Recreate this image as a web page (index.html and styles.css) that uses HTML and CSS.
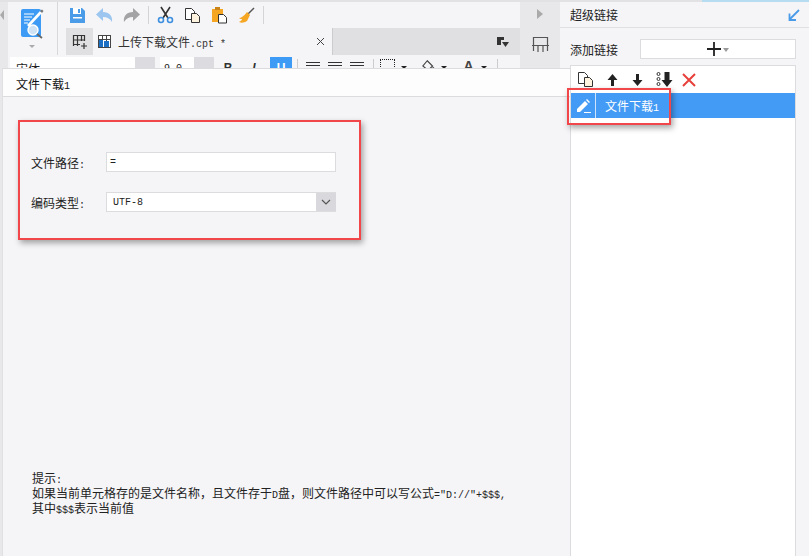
FILE: index.html
```html
<!DOCTYPE html>
<html lang="zh">
<head>
<meta charset="utf-8">
<title>超级链接</title>
<link rel="stylesheet" href="styles.css">
</head>
<body>
<div class="app">
  <div class="edge">
    <svg class="edge-arrow" width="4" height="10" viewBox="0 0 4 10"><path d="M4 0L0 5l4 5z" fill="#aaa"/></svg>
  </div>
  <div class="main">
    <div class="ribbon">
      <div class="rib-left">
        <div class="rib-top">
          <div class="logo-col">
            <svg width="24" height="40" viewBox="0 0 24 40">
              <rect x="0" y="0" width="20" height="28" rx="2" fill="#3d9bf5"/>
              <path d="M3 5h10M3 8h8M3 11h6M3 14h4" stroke="#fff" stroke-width="1.200"/>
              <path d="M7 17L20 3" stroke="#fff" stroke-width="2.600"/>
              <path d="M19 2l2-1.500 1.500 1.500-1.500 2z" fill="#777"/>
              <circle cx="12" cy="21" r="5" fill="#cfe3f5" stroke="#fff" stroke-width="1.400"/>
              <path d="M16 25l5 4" stroke="#666" stroke-width="1.800"/>
              <path d="M8 36h6l-3 3z" fill="#aaa"/>
            </svg>
          </div>
          <div class="rib-body">
            <div class="tools">
              <svg width="17" height="17" viewBox="0 0 17 17"><path d="M1 1h12l3 3v12H1z" fill="#4a9be8"/><rect x="4" y="1" width="8" height="6" fill="#fff"/><rect x="9" y="2" width="2" height="4" fill="#4a9be8"/><rect x="4" y="10" width="9" height="1.500" fill="#fff"/></svg>
              <svg width="17" height="17" viewBox="0 0 17 17"><path d="M7 1L0 7.500 7 14v-4c4 0 7 1.500 9 5 1-6-3-10-9-10z" fill="#9cc6ef"/></svg>
              <svg width="17" height="17" viewBox="0 0 17 17"><path d="M10 1l7 6.500L10 14v-4c-4 0-7 1.500-9 5-1-6 3-10 9-10z" fill="#a3a3a5"/></svg>
              <i class="sep"></i>
              <svg width="17" height="18" viewBox="0 0 17 18"><path d="M4 1l7 11M13 1L6 12" stroke="#333" stroke-width="1.600" fill="none"/><circle cx="4" cy="14" r="2.500" fill="none" stroke="#3d8fdf" stroke-width="1.600"/><circle cx="13" cy="14" r="2.500" fill="none" stroke="#3d8fdf" stroke-width="1.600"/></svg>
              <svg width="17" height="17" viewBox="0 0 17 17"><path d="M1.500 1.500h6l3 3v8h-9z" fill="#fff" stroke="#333"/><path d="M7.500 6.500h5l3 3v6h-8z" fill="#fdf3df" stroke="#333"/></svg>
              <svg width="17" height="17" viewBox="0 0 17 17"><rect x="1" y="2" width="11" height="13" fill="#f5a623"/><rect x="4" y="0" width="5" height="3" fill="#c9851a"/><path d="M7.500 7.500h5l3 3v5.500h-8z" fill="#fff" stroke="#333"/></svg>
              <svg width="17" height="17" viewBox="0 0 17 17"><path d="M16 1l-6 6" stroke="#555" stroke-width="1.500"/><path d="M9 5l3 3-3 6c-3 2-6 2-8 1 2-1 3-2 3-3-1 0-2 0-3-1 2 0 5-2 8-6z" fill="#f5a623"/></svg>
              <i class="sep sep-end"></i>
            </div>
            <div class="tabbar">
              <div class="grid-btn">
                <svg width="16" height="16" viewBox="0 0 16 16" fill="none" stroke="#333" stroke-width="1.200"><path d="M1 1.500h12M1 6h12M1 10.500h7M1.500 1v11M5.500 1v11M9.500 1v6M12.500 1v6M12 9v6M9 12h6"/></svg>
              </div>
              <div class="tab">
                <svg width="13" height="13" viewBox="0 0 13 13"><rect x=".5" y=".5" width="12" height="12" fill="#fff" stroke="#444"/><path d="M4.500 0v13M8.500 0v13M0 4.500h13" stroke="#444"/><rect x="1" y="5" width="4" height="7" fill="#1d6fc4"/><rect x="6" y="6" width="5" height="6" fill="#1d6fc4"/></svg>
                <span class="tab-name">上传下载文件<span class="lat">.cpt *</span></span>
                <svg width="9" height="9" viewBox="0 0 9 9"><path d="M1 1l7 7M8 1L1 8" stroke="#444" stroke-width="1"/></svg>
              </div>
              <div class="tab-rest">
                <svg width="12" height="10" viewBox="0 0 12 10"><path d="M0 0h7v3h-3v5H0z" fill="#333"/><path d="M5 5h7L8.500 10z" fill="#333"/></svg>
              </div>
            </div>
          </div>
        </div>
        <div class="format">
          <div class="combo font-combo"><span>宋体</span><b></b></div>
          <div class="combo size-combo"><span class="size-val">9.0</span><b></b></div>
          <span class="fmt">B</span><span class="fmt ital">I</span><span class="fmt under">U</span>
          <i class="fsep"></i>
          <span class="al"></span><span class="al"></span><span class="al"></span>
          <i class="fsep"></i>
          <span class="dotted"></span><i class="caret"></i>
          <svg class="fill-ico" width="16" height="14" viewBox="0 0 16 14"><path d="M6 1l6 6-5 5-6-5z" fill="none" stroke="#444" stroke-width="1.300"/><path d="M12 7c2 2 3 3 3 4s-1 2-2 1-1-3-1-5z" fill="#444"/></svg><i class="caret caret-fill"></i>
          <span class="big-a">A</span><i class="caret caret-last"></i>
          <i class="fsep"></i>
        </div>
      </div>
      <div class="collapse">
        <svg class="arrow" width="6" height="10" viewBox="0 0 6 10"><path d="M0 0l6 5-6 5z" fill="#aaa"/></svg>
        <svg class="layout-ico" width="17" height="17" viewBox="0 0 17 17" fill="none" stroke="#555" stroke-width="1.200"><path d="M1.500 15V1.500h14V15M0 9.500h17M6 9.500V16M11 9.500V16"/></svg>
      </div>
    </div>
  </div>
  <aside class="side">
    <div class="side-head">
      <span>超级链接</span>
      <svg width="12" height="12" viewBox="0 0 12 12"><path d="M11 1L2 10M1.500 4.500v6.500h6.500" fill="none" stroke="#4a9be8" stroke-width="1.800"/></svg>
    </div>
    <div class="add-row">
      <span>添加链接</span>
      <div class="add-btn">
        <svg width="14" height="14" viewBox="0 0 14 14"><path d="M0 7h14M7 0v14" stroke="#222" stroke-width="1.800"/></svg>
        <i class="add-caret"></i>
      </div>
    </div>
    <div class="list">
      <div class="list-tools">
        <svg width="17" height="17" viewBox="0 0 17 17"><path d="M1.500 1.500h6l3 3v8h-9z" fill="#fff" stroke="#333"/><path d="M7.500 6.500h5l3 3v6h-8z" fill="#fdf3df" stroke="#333"/></svg>
        <svg width="13" height="14" viewBox="0 0 13 14"><path d="M6.500 1l5 6H8v6H5V7H1.500z" fill="#222"/></svg>
        <svg width="13" height="14" viewBox="0 0 13 14"><path d="M6.500 13l5-6H8V1H5v6H1.500z" fill="#222"/></svg>
        <svg width="17" height="17" viewBox="0 0 17 17"><circle cx="2.500" cy="3" r="1.500" fill="none" stroke="#333"/><circle cx="2.500" cy="8" r="1.500" fill="none" stroke="#333"/><circle cx="2.500" cy="13" r="1.500" fill="none" stroke="#333"/><path d="M11 16l5.500-7H13.500V1h-5v8H5.500z" fill="#222"/></svg>
        <svg class="del-ico" width="14" height="14" viewBox="0 0 14 14"><path d="M1 1l12 12M13 1L1 13" stroke="#e8403a" stroke-width="2"/></svg>
      </div>
      <div class="list-row">
        <div class="edit-ico">
          <svg width="15" height="14" viewBox="0 0 15 14"><path d="M1 10L9 2l3 3-8 8H1zM10 1l1-1 3 3-1 1z" fill="#fff"/><path d="M8 13.500h7" stroke="#fff"/></svg>
        </div>
        <span class="row-name">文件下载<span class="lat">1</span></span>
      </div>
    </div>
  </aside>

  <section class="dialog">
    <div class="dlg-title">文件下载<span class="lat">1</span></div>
    <div class="form">
      <div class="field">
        <label>文件路径<span class="lat">:</span></label>
        <div class="input lat">=</div>
      </div>
      <div class="field">
        <label>编码类型<span class="lat">:</span></label>
        <div class="input select"><span class="lat sel-val">UTF-8</span>
          <span class="sel-btn"><svg width="10" height="6" viewBox="0 0 10 6"><path d="M1 1l4 4 4-4" fill="none" stroke="#555" stroke-width="1.200"/></svg></span>
        </div>
      </div>
    </div>
    <div class="hint">
      <div class="hint-line">提示<span class="lat">:</span></div>
      <div class="hint-line">如果当前单元格存的是文件名称，且文件存于<span class="lat">D</span>盘，则文件路径中可以写公式<span class="lat">="D://"+$$$,</span></div>
      <div class="hint-line">其中<span class="lat">$$$</span>表示当前值</div>
    </div>
  </section>

  <div class="mark mark-form"></div>
  <div class="mark mark-row"></div>
</div>
</body>
</html>
```
FILE: styles.css
```css
* { box-sizing: border-box; }
html, body { margin: 0; padding: 0; }
body {
  width: 809px;
  height: 556px;
  overflow: hidden;
  font-family: "Noto Sans CJK SC", "Liberation Sans", sans-serif;
  font-size: 12px;
  color: #222;
  background: #f5f5f7;
}
.lat { font-family: "Liberation Mono", "Noto Sans CJK SC", monospace; font-size: 10px; line-height: 1; }
svg { display: block; flex: none; }

.app { position: relative; display: flex; width: 809px; height: 556px; padding-top: 2px; background: linear-gradient(90deg, #e2e2e4 702px, #b5dcf0 702px); }
.edge { width: 8px; background: #e8e8ea; padding-top: 8px; }
.main { width: 552px; }
.ribbon { display: flex; height: 100%; background: #f5f5f7; }
.rib-left { width: 512px; }
.rib-top { display: flex; height: 53px; }
.logo-col { width: 50px; padding: 7px 0 0 13px; border-right: 1px solid #d8d8da; }
.rib-body { width: 462px; }
.tools { display: flex; align-items: center; gap: 10px; height: 26px; padding-left: 11px; }
.sep { width: 1px; height: 18px; background: #d4d4d6; margin: 0 -2px; }
.sep-end { margin: 0 0 0 -2px; }
.tabbar { display: flex; height: 27px; background: #e0e0e2; margin-left: 8px; }
.grid-btn { width: 27px; display: flex; align-items: center; justify-content: center; background: #e0e0e2; }
.tab { display: flex; align-items: center; width: 240px; padding: 0 7px 0 5px; background: #f5f5f7; border-right: 1px solid #ccc; }
.tab-name { margin-left: 7px; flex: 1; color: #333; }
.tab-rest { flex: 1; display: flex; justify-content: flex-end; align-items: center; padding-right: 11px; }

.format { display: flex; align-items: flex-start; height: 30px; padding: 2px 0 0 2px; }
.combo { display: flex; height: 22px; background: #fff; line-height: 24px; padding-left: 6px; }
.combo b { margin-left: auto; width: 20px; height: 22px; background: #dcdce0; }
.font-combo { width: 145px; margin-right: 5px; }
.size-combo { width: 54px; margin-right: 3px; padding-left: 4px; }
.size-val { font-family: "Liberation Mono", monospace; font-size: 10px; line-height: 24px; }
.fmt { width: 22px; height: 22px; text-align: center; font: 700 12px/22px "Liberation Sans", sans-serif; margin-right: 4px; color: #333; }
.ital { font-style: italic; margin-right: 5px; }
.under { background: #3d9bf5; color: #fff; margin-right: 4px; }
.fsep { width: 1px; height: 20px; background: #ccc; margin: 2px 8px 0 1px; }
.al { width: 14px; height: 7px; margin: 5px 8px 0 0; background: repeating-linear-gradient(#333 0 1px, transparent 1px 3px); }
.dotted { width: 15px; height: 14px; border: 1px dotted #222; margin: 2px 0 0 -2px; }
.caret { width: 0; height: 0; border: 3px solid transparent; border-top: 3px solid #222; margin: 9px 15px 0 6px; }
.caret-fill { margin-left: 5px; }
.caret-last { margin-right: 9px; }
.fill-ico { margin-top: 2px; width: 14px; }
.big-a { width: 13px; font: 700 14px/14px "Liberation Sans", sans-serif; color: #444; margin-top: 2px; text-align: center; }
.collapse { width: 40px; background: #e8e8ea; padding: 7px 0 0 17px; }
.layout-ico { margin: 17px 0 0 -5px; }

.side { width: 249px; padding-left: 10px; background: #f5f5f7; display: flex; flex-direction: column; }
.side-head { display: flex; align-items: center; justify-content: space-between; height: 26px; margin-left: -10px; padding: 0 9px 0 10px; border-bottom: 1px solid #e0e0e2; }
.add-row { display: flex; align-items: center; height: 37px; padding-top: 5px; }
.add-row span { width: 70px; }
.add-btn { display: flex; align-items: center; justify-content: center; gap: 2px; width: 156px; height: 20px; background: #fff; border: 1px solid #dcdcde; }
.add-caret { width: 0; height: 0; border: 3px solid transparent; border-top: 4px solid #999; margin-top: 4px; }
.list { flex: 1; width: 226px; background: #fff; border: 1px solid #dcdcde; border-bottom: 0; }
.list-tools { display: flex; align-items: center; gap: 12px; height: 27px; padding-left: 6px; }
.del-ico { margin-left: -3px; }
.list-row { display: flex; height: 25px; background: #439bf5; color: #fff; }
.edit-ico { width: 25px; display: flex; align-items: center; justify-content: center; border-right: 1px solid #cfe4fb; }
.row-name { margin-left: 9px; line-height: 25px; }

.dialog { position: absolute; left: 2px; top: 68px; width: 568px; height: 488px; background: #f5f5f7; border-left: 1px solid #e0e0e2; display: flex; flex-direction: column; }
.dlg-title { height: 29px; padding-left: 13px; line-height: 29px; background: #fdfdfd; border-top: 1px solid #dcdcde; border-bottom: 1px solid #dcdcde; color: #111; }
.form { display: flex; flex-direction: column; gap: 20px; padding: 55px 0 0 28px; }
.field { display: flex; align-items: center; }
.field label { width: 75px; }
.input { width: 230px; height: 20px; padding-left: 3px; background: #fff; border: 1px solid #dcdcde; line-height: 20px; }
.select { display: flex; border-right: 0; padding-left: 0; }
.sel-val { padding-left: 6px; flex: 1; line-height: 20px; }
.sel-btn { width: 20px; background: #d9d9dd; display: flex; align-items: center; justify-content: center; }
.hint { margin-top: auto; padding: 0 0 41px 29px; }
.hint-line { height: 15px; line-height: 15px; white-space: nowrap; }

.mark { position: absolute; border: 2px solid #f2474a; box-shadow: 2px 3px 6px rgba(0, 0, 0, .35); }
.mark-form { left: 18px; top: 120px; width: 343px; height: 120px; }
.mark-row { left: 567px; top: 88px; width: 104px; height: 37px; }
```
